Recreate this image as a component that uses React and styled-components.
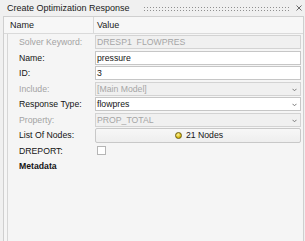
import React from 'react';
import styled, { createGlobalStyle, css } from 'styled-components';

const GlobalStyle = createGlobalStyle`
  html, body {
    margin: 0;
    padding: 0;
    background: #f0f0f0;
  }
  body {
    font-family: 'Liberation Sans', Arial, sans-serif;
    font-size: 8.7px;
    color: #141414;
  }
`;

const Window = styled.div`
  width: 305px;
  height: 241px;
  display: flex;
  flex-direction: column;
  overflow: hidden;
  background: #f0f0f0;
`;

const TitleBar = styled.div`
  height: 16px;
  display: flex;
  align-items: center;
  padding-left: 7px;
`;

const Title = styled.span`
  font-size: 9px;
  color: #202020;
  white-space: nowrap;
`;

const Grip = styled.div`
  flex: 1;
  height: 5px;
  margin: 1px 7px 0 13px;
  background-image: radial-gradient(circle, #8f8f8f 0.6px, transparent 0.7px);
  background-size: 3px 3px;
`;

const CloseButton = styled.div`
  width: 6px;
  height: 6px;
  margin-right: 3px;
  display: flex;
  align-items: center;
  justify-content: center;
`;

const Panel = styled.div`
  flex: 1;
  margin-left: 3px;
  margin-right: 1px;
  border: 1px solid #cfcfcf;
  border-bottom: none;
  background: #f5f5f5;
  display: flex;
  flex-direction: column;
`;

const HeaderRow = styled.div`
  height: 16px;
  display: grid;
  grid-template-columns: 90px 1fr;
  border-bottom: 1px solid #dadada;
  background: #f7f7f7;
`;

const HeaderCell = styled.div`
  display: flex;
  align-items: center;
  padding-left: ${(p) => p.$pad}px;
  font-size: 9px;
  color: #1a1a1a;
  border-right: ${(p) => (p.$divider ? '1px solid #dadada' : 'none')};
`;

const Body = styled.div`
  flex: 1;
  margin-left: 3px;
  border-left: 1px solid #d6d6d6;
  padding-top: 0.25px;
`;

const Row = styled.div`
  height: 15.5px;
  display: grid;
  grid-template-columns: 87px 1fr;
  align-items: center;
  padding-right: 2px;
`;

const Label = styled.div`
  padding-left: 11px;
  white-space: nowrap;
  color: ${(p) => (p.$disabled ? '#a3a3a3' : '#141414')};
  font-weight: ${(p) => (p.$bold ? 'bold' : 'normal')};
`;

const Field = styled.div`
  height: 14px;
  box-sizing: border-box;
  position: relative;
  display: flex;
  align-items: center;
  padding-left: 1px;
  border: 1px solid ${(p) => (p.$disabled ? '#d3d3d3' : '#c6c6c6')};
  background: ${(p) => (p.$disabled ? '#f0f0f0' : '#ffffff')};
  color: ${(p) => (p.$disabled ? '#a6a6a6' : '#141414')};
  white-space: nowrap;
`;

const Chevron = styled.svg`
  position: absolute;
  right: 3px;
  top: 5px;
`;

const NodesButton = styled.div`
  height: 15px;
  box-sizing: border-box;
  display: flex;
  align-items: center;
  justify-content: center;
  gap: 4px;
  border: 1px solid #c8c8c8;
  border-radius: 2px;
  background: linear-gradient(#f7f7f7, #eeeeee);
  color: #141414;
  padding-left: 2px;
`;

const NodeDot = styled.span`
  width: 5px;
  height: 5px;
  border-radius: 50%;
  background: radial-gradient(circle at 40% 35%, #fff59a, #d4b300 70%);
  border: 0.5px solid #6d5e10;
`;

const Checkbox = styled.div`
  width: 9px;
  height: 9px;
  box-sizing: border-box;
  margin-left: 2px;
  border: 1px solid #b5b5b5;
  background: #ffffff;
`;

const SelectField = ({ value, disabled }) => (
  <Field $disabled={disabled}>
    {value}
    <Chevron width="5" height="4" viewBox="0 0 5 4">
      <path d="M0.5 0.8 L2.5 2.8 L4.5 0.8" fill="none" stroke="#7a7a7a" strokeWidth="1" />
    </Chevron>
  </Field>
);

const App = () => (
  <>
    <GlobalStyle />
    <Window>
      <TitleBar>
        <Title>Create Optimization Response</Title>
        <Grip />
        <CloseButton>
          <svg width="6" height="6" viewBox="0 0 6 6">
            <path d="M0.5 0.5 L5.5 5.5 M5.5 0.5 L0.5 5.5" stroke="#6a6a6a" strokeWidth="1" />
          </svg>
        </CloseButton>
      </TitleBar>
      <Panel>
        <HeaderRow>
          <HeaderCell $pad={6} $divider>Name</HeaderCell>
          <HeaderCell $pad={3}>Value</HeaderCell>
        </HeaderRow>
        <Body>
          <Row>
            <Label $disabled>Solver Keyword:</Label>
            <Field $disabled>DRESP1&nbsp;&nbsp;FLOWPRES</Field>
          </Row>
          <Row>
            <Label>Name:</Label>
            <Field>pressure</Field>
          </Row>
          <Row>
            <Label>ID:</Label>
            <Field>3</Field>
          </Row>
          <Row>
            <Label $disabled>Include:</Label>
            <SelectField value="[Main Model]" disabled />
          </Row>
          <Row>
            <Label>Response Type:</Label>
            <SelectField value="flowpres" />
          </Row>
          <Row>
            <Label $disabled>Property:</Label>
            <SelectField value="PROP_TOTAL" disabled />
          </Row>
          <Row>
            <Label>List Of Nodes:</Label>
            <NodesButton>
              <NodeDot />
              21 Nodes
            </NodesButton>
          </Row>
          <Row>
            <Label>DREPORT:</Label>
            <Checkbox />
          </Row>
          <Row>
            <Label $bold>Metadata</Label>
          </Row>
        </Body>
      </Panel>
    </Window>
  </>
);

export default App;
